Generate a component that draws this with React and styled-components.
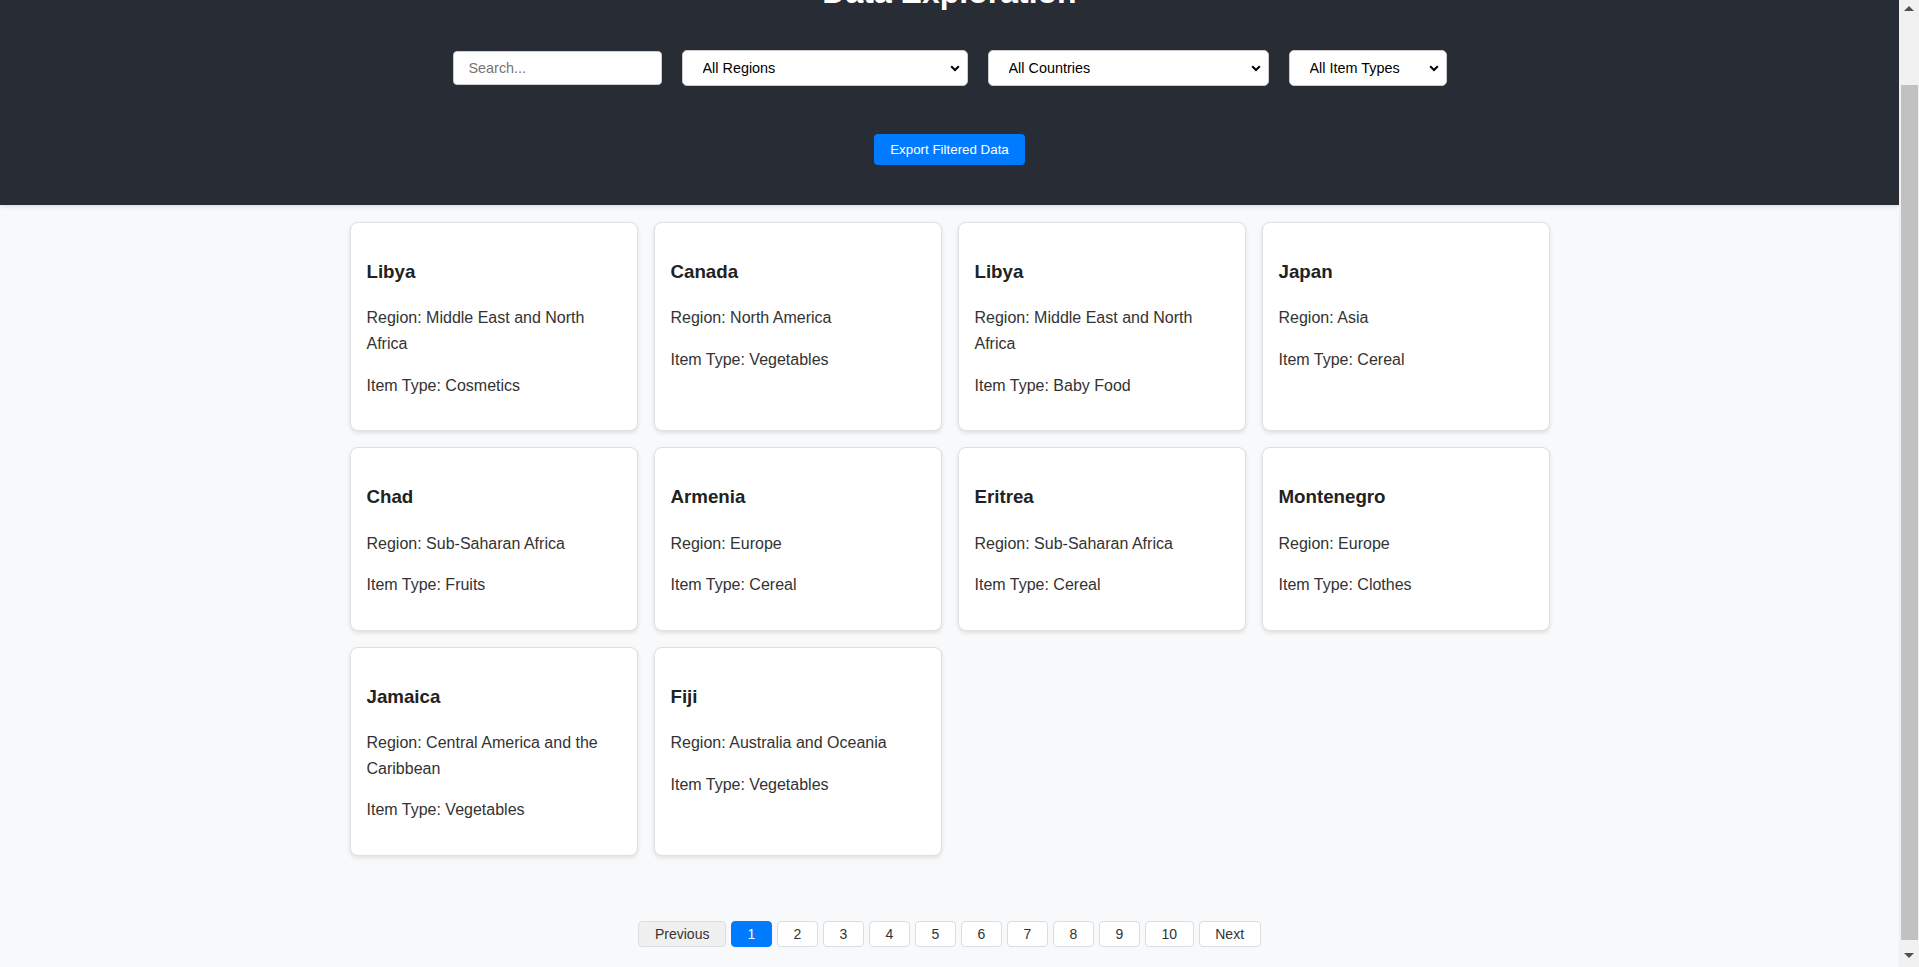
import React, { useEffect } from "react";
import styled, { createGlobalStyle } from "styled-components";

const GlobalStyle = createGlobalStyle`
  html, body {
    margin: 0;
    padding: 0;
    background: #f8f9fa;
    font-family: "Liberation Sans", Arial, sans-serif;
    line-height: 1.6;
    color: #333;
  }
  * { box-sizing: border-box; }
`;

const Page = styled.div`
  margin-right: 20px;
`;

const ScrollTrack = styled.div`
  position: fixed;
  top: 0;
  right: 0;
  bottom: 0;
  width: 20px;
  background: #f1f1f1;
  z-index: 10;
`;

const ScrollThumb = styled.div`
  position: absolute;
  top: 85px;
  left: 2px;
  right: 1px;
  height: 855px;
  background: #c1c1c1;
`;

const ScrollArrow = styled.svg`
  position: absolute;
  left: 5px;
  ${(p) => (p.$down ? "bottom: 9px;" : "top: 6px;")}
`;

const Header = styled.header`
  background: #282c34;
  padding: 20px 20px 40px;
  display: flex;
  flex-direction: column;
  align-items: center;
  box-shadow: 0 2px 4px rgba(0, 0, 0, 0.1);
`;

const Title = styled.h1`
  margin: 23.94px 0 21.44px;
  font-size: 32px;
  font-weight: bold;
  line-height: 1.6;
  color: #ffffff;
`;

const FilterBar = styled.div`
  display: flex;
  align-items: center;
  gap: 20px;
  margin: 10.5px 0 48px;
`;

const SearchInput = styled.input`
  width: 209px;
  height: 34px;
  padding: 8px 15px;
  border: 1px solid #ccc;
  border-radius: 4px;
  background: #fff;
  font-family: "Liberation Sans", Arial, sans-serif;
  font-size: 14.4px;
  color: #000;
  outline: none;
  &::placeholder { color: #757575; }
`;

const SelectWrap = styled.div`
  position: relative;
  width: ${(p) => p.$width}px;
  height: 36px;
`;

const Select = styled.select`
  appearance: none;
  -webkit-appearance: none;
  width: 100%;
  height: 100%;
  padding: 0 30px 0 20px;
  border: 1px solid #ccc;
  border-radius: 5px;
  background: #fff;
  font-family: "Liberation Sans", Arial, sans-serif;
  font-size: 14.4px;
  color: #000;
  outline: none;
`;

const Chevron = styled.svg`
  position: absolute;
  right: 8px;
  top: 15px;
  pointer-events: none;
`;

const ExportButton = styled.button`
  background: #007bff;
  color: #fff;
  border: none;
  border-radius: 4px;
  padding: 8px 16px;
  font-family: "Liberation Sans", Arial, sans-serif;
  font-size: 13.333px;
  line-height: normal;
  cursor: pointer;
`;

const Main = styled.main`
  padding: 17px 20px 30px;
`;

const Grid = styled.div`
  max-width: 1200px;
  margin: 0 auto;
  display: grid;
  grid-template-columns: repeat(4, 1fr);
  gap: 16px;
`;

const Card = styled.div`
  background: #fff;
  border: 1px solid #e0e0e0;
  border-radius: 8px;
  padding: 15px 16px 16px;
  box-shadow: 0 2px 4px rgba(0, 0, 0, 0.1);
`;

const CardTitle = styled.h3`
  margin: 18.72px 0;
  font-size: 18.72px;
  font-weight: bold;
  color: #222;
`;

const CardText = styled.p`
  margin: 16px 0;
  font-size: 16px;
  color: #333;
`;

const Pagination = styled.div`
  display: flex;
  justify-content: center;
  gap: 5px;
  margin-top: 65.4px;
`;

const PageButton = styled.button`
  padding: 4px 15.6px;
  border: 1px solid ${(p) => (p.$active ? "#007bff" : "#ddd")};
  border-radius: 4px;
  background: ${(p) => (p.$active ? "#007bff" : p.$disabled ? "#f0f0f0" : "#fff")};
  color: ${(p) => (p.$active ? "#fff" : "#333")};
  font-family: "Liberation Sans", Arial, sans-serif;
  font-size: 14px;
  line-height: normal;
  cursor: pointer;
`;

const items = [
  { country: "Libya", region: "Middle East and North Africa", type: "Cosmetics" },
  { country: "Canada", region: "North America", type: "Vegetables" },
  { country: "Libya", region: "Middle East and North Africa", type: "Baby Food" },
  { country: "Japan", region: "Asia", type: "Cereal" },
  { country: "Chad", region: "Sub-Saharan Africa", type: "Fruits" },
  { country: "Armenia", region: "Europe", type: "Cereal" },
  { country: "Eritrea", region: "Sub-Saharan Africa", type: "Cereal" },
  { country: "Montenegro", region: "Europe", type: "Clothes" },
  { country: "Jamaica", region: "Central America and the Caribbean", type: "Vegetables" },
  { country: "Fiji", region: "Australia and Oceania", type: "Vegetables" },
];

const ChevronIcon = () => (
  <Chevron width="10" height="7" viewBox="0 0 10 7">
    <polyline points="1.2,1.2 5,5 8.8,1.2" fill="none" stroke="#000" strokeWidth="2" />
  </Chevron>
);

const FilterSelect = ({ width, label, options }) => (
  <SelectWrap $width={width}>
    <Select defaultValue="">
      <option value="">{label}</option>
      {options.map((o) => (
        <option key={o} value={o}>{o}</option>
      ))}
    </Select>
    <ChevronIcon />
  </SelectWrap>
);

const Scrollbar = () => (
  <ScrollTrack>
    <ScrollArrow width="10" height="5" viewBox="0 0 10 5">
      <polygon points="0,5 5,0 10,5" fill="#505050" />
    </ScrollArrow>
    <ScrollThumb />
    <ScrollArrow $down width="10" height="5" viewBox="0 0 10 5">
      <polygon points="0,0 10,0 5,5" fill="#505050" />
    </ScrollArrow>
  </ScrollTrack>
);

export default function App() {
  useEffect(() => {
    window.scrollTo(0, 77);
    const t = setTimeout(() => window.scrollTo(0, 77), 50);
    return () => clearTimeout(t);
  }, []);

  return (
    <>
      <GlobalStyle />
      <Page>
        <Header>
          <Title>Data Exploration</Title>
          <FilterBar>
            <SearchInput placeholder="Search..." />
            <FilterSelect
              width={286}
              label="All Regions"
              options={["Asia", "Europe", "North America", "Sub-Saharan Africa"]}
            />
            <FilterSelect
              width={281}
              label="All Countries"
              options={["Canada", "Chad", "Fiji", "Japan", "Libya"]}
            />
            <FilterSelect
              width={158}
              label="All Item Types"
              options={["Baby Food", "Cereal", "Clothes", "Cosmetics"]}
            />
          </FilterBar>
          <ExportButton>Export Filtered Data</ExportButton>
        </Header>
        <Main>
          <Grid>
            {items.map((it, i) => (
              <Card key={i}>
                <CardTitle>{it.country}</CardTitle>
                <CardText>Region: {it.region}</CardText>
                <CardText>Item Type: {it.type}</CardText>
              </Card>
            ))}
          </Grid>
          <Pagination>
            <PageButton $disabled>Previous</PageButton>
            {[1, 2, 3, 4, 5, 6, 7, 8, 9, 10].map((n) => (
              <PageButton key={n} $active={n === 1}>{n}</PageButton>
            ))}
            <PageButton>Next</PageButton>
          </Pagination>
        </Main>
      </Page>
      <Scrollbar />
    </>
  );
}
